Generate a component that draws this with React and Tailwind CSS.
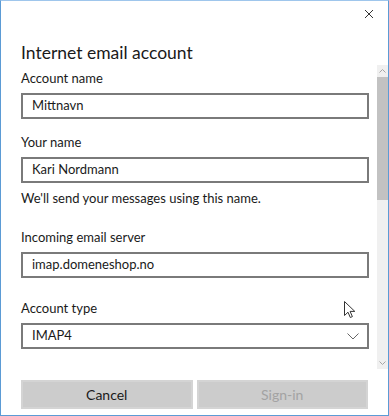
import React from 'react';

const font = { fontFamily: 'Lato, "Noto Sans", sans-serif' };

function Field({ label, value, className = '' }) {
  return (
    <div className={className}>
      <div className="text-[13px] leading-[20px] text-[#1a1a1a]">{label}</div>
      <div className="mt-[5px] flex h-[26px] items-center border-2 border-[#7a7a7a] bg-white px-[9px] text-[13px] text-[#1a1a1a]">
        {value}
      </div>
    </div>
  );
}

export default function App() {
  return (
    <div
      className="flex h-[416px] w-[389px] flex-col border border-t-[#9fc6ec] border-[#5b9bd5] bg-white"
      style={font}
    >
      {/* Title bar */}
      <div className="flex h-[26px] justify-end pr-[14px] pt-[8px]">
        <svg width="10" height="10" viewBox="0 0 10 10" className="text-[#333]">
          <path d="M1 1L9 9M9 1L1 9" stroke="currentColor" strokeWidth="1" />
        </svg>
      </div>

      <div className="pl-[20px] pt-[14px] text-[17.5px] leading-[24px] text-[#1a1a1a]">
        Internet email account
      </div>

      {/* Scrollable body */}
      <div className="flex h-[304px] flex-none">
        <div className="flex-1 overflow-hidden pl-[20px] pr-[8px] pt-[3px]">
          <Field label="Account name" value="Mittnavn" />
          <Field label="Your name" value="Kari Nordmann" className="mt-[13px]" />
          <div className="mt-[5px] text-[13px] leading-[20px] text-[#1a1a1a]">
            We'll send your messages using this name.
          </div>
          <Field label="Incoming email server" value="imap.domeneshop.no" className="mt-[19px]" />
          <div className="relative mt-[20px]">
            <div className="text-[13px] leading-[20px] text-[#1a1a1a]">Account type</div>
            <div className="mt-[5px] flex h-[26px] items-center justify-between border-2 border-[#7a7a7a] bg-white pl-[9px] pr-[8px] text-[13px] text-[#1a1a1a]">
              <span>IMAP4</span>
              <svg width="12" height="7" viewBox="0 0 12 7">
                <path d="M0.5 0.5L6 6L11.5 0.5" fill="none" stroke="#666" strokeWidth="1" />
              </svg>
            </div>
            {/* mouse pointer */}
            <svg
              width="12"
              height="18"
              viewBox="0 0 12 18"
              className="absolute right-[13px] top-[3px]"
            >
              <path
                d="M0.5 0.5V14.5L4 11.2L6.3 16.5L8.4 15.6L6.1 10.4H10.8Z"
                fill="white"
                stroke="#333"
                strokeWidth="1"
                strokeLinejoin="round"
              />
            </svg>
          </div>
        </div>

        {/* Scrollbar */}
        <div className="flex w-[11px] flex-col bg-[#f0f0f0]">
          <div className="flex h-[12px] items-center justify-center">
            <svg width="7" height="4" viewBox="0 0 7 4">
              <path d="M0.5 3.5L3.5 0.5L6.5 3.5" fill="none" stroke="#a6a6a6" strokeWidth="1" />
            </svg>
          </div>
          <div className="h-[123px] bg-[#c2c2c2]" />
          <div className="flex-1" />
          <div className="flex h-[12px] items-center justify-center">
            <svg width="7" height="4" viewBox="0 0 7 4">
              <path d="M0.5 0.5L3.5 3.5L6.5 0.5" fill="none" stroke="#a6a6a6" strokeWidth="1" />
            </svg>
          </div>
        </div>
      </div>

      {/* Footer buttons */}
      <div className="flex gap-[4px] pl-[20px] pr-[20px] pt-[11px]">
        <button className="flex h-[29px] flex-1 items-center justify-center border-2 border-[#d4d4d4] bg-[#cccccc] text-[14px] text-[#1a1a1a]">
          Cancel
        </button>
        <button className="flex h-[29px] flex-1 items-center justify-center border-2 border-[#d4d4d4] bg-[#cccccc] text-[14px] text-[#a3a3a3]">
          Sign-in
        </button>
      </div>
    </div>
  );
}
